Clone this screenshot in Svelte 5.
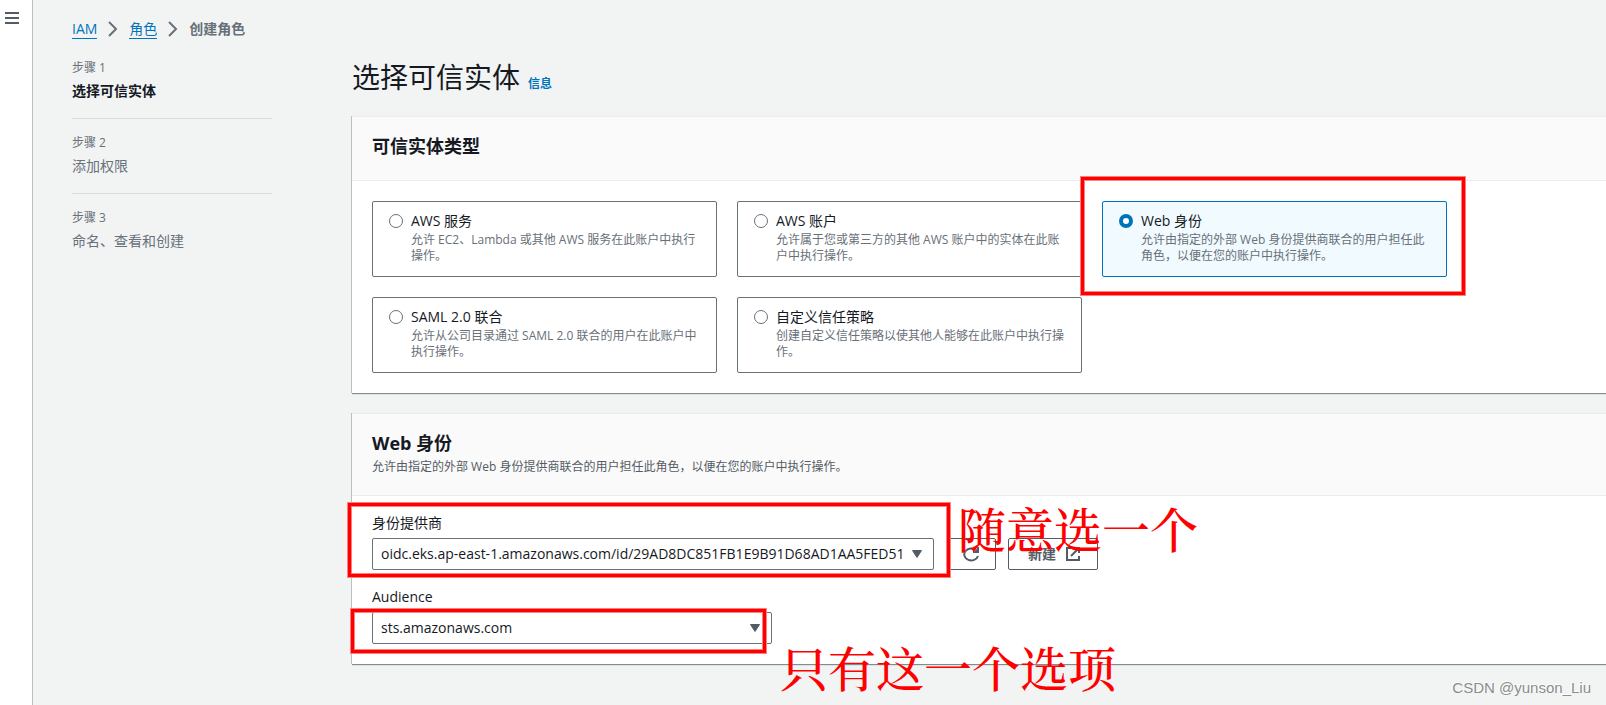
<script lang="ts">
  interface Step {
    label: string;
    title: string;
  }

  interface EntityType {
    value: string;
    label: string;
    description: string;
  }

  const steps: Step[] = [
    { label: '步骤 1', title: '选择可信实体' },
    { label: '步骤 2', title: '添加权限' },
    { label: '步骤 3', title: '命名、查看和创建' },
  ];

  const entityTypes: EntityType[] = [
    {
      value: 'service',
      label: 'AWS 服务',
      description: '允许 EC2、Lambda 或其他 AWS 服务在此账户中执行操作。',
    },
    {
      value: 'account',
      label: 'AWS 账户',
      description: '允许属于您或第三方的其他 AWS 账户中的实体在此账户中执行操作。',
    },
    {
      value: 'web',
      label: 'Web 身份',
      description: '允许由指定的外部 Web 身份提供商联合的用户担任此角色，以便在您的账户中执行操作。',
    },
    {
      value: 'saml',
      label: 'SAML 2.0 联合',
      description: '允许从公司目录通过 SAML 2.0 联合的用户在此账户中执行操作。',
    },
    {
      value: 'custom',
      label: '自定义信任策略',
      description: '创建自定义信任策略以使其他人能够在此账户中执行操作。',
    },
  ];

  const providers = ['oidc.eks.ap-east-1.amazonaws.com/id/29AD8DC851FB1E9B91D68AD1AA5FED51'];
  const audiences = ['sts.amazonaws.com'];

  let activeStep = $state(0);
  let entityType = $state('web');
  let provider = $state(providers[0]);
  let audience = $state(audiences[0]);
</script>

{#snippet chevron()}
  <svg class="chevron" viewBox="0 0 10 16" aria-hidden="true">
    <path d="M1 1l7 7-7 7" />
  </svg>
{/snippet}

{#snippet caret()}
  <svg class="caret" viewBox="0 0 10 8" aria-hidden="true">
    <path d="M.5.5h9L5 7.5z" />
  </svg>
{/snippet}

<div class="layout">
  <aside class="rail">
    <button class="rail-toggle" aria-label="打开导航">
      <svg viewBox="0 0 14 12" aria-hidden="true">
        <path d="M0 1h14M0 6h14M0 11h14" />
      </svg>
    </button>
  </aside>

  <div class="page">
    <nav class="breadcrumb" aria-label="导航路径">
      <a href="#iam">IAM</a>
      {@render chevron()}
      <a href="#roles">角色</a>
      {@render chevron()}
      <span>创建角色</span>
    </nav>

    <div class="wizard">
      <ol class="steps">
        {#each steps as step, i}
          <li class:active={i === activeStep}>
            <span class="step-label">{step.label}</span>
            <span class="step-title">{step.title}</span>
          </li>
        {/each}
      </ol>

      <main>
        <div class="title">
          <h1>选择可信实体</h1>
          <a href="#info">信息</a>
        </div>

        <section class="card">
          <header>
            <h2>可信实体类型</h2>
          </header>
          <div class="tiles">
            {#each entityTypes as type}
              <label class="tile" class:selected={entityType === type.value}>
                <input type="radio" name="entity-type" value={type.value} bind:group={entityType} />
                <span class="tile-text">
                  <span class="tile-label">{type.label}</span>
                  <span class="tile-description">{type.description}</span>
                </span>
                {#if type.value === 'web'}
                  <span class="mark mark--tile"></span>
                {/if}
              </label>
            {/each}
          </div>
        </section>

        <section class="card">
          <header>
            <h2>Web 身份</h2>
            <p>允许由指定的外部 Web 身份提供商联合的用户担任此角色，以便在您的账户中执行操作。</p>
          </header>
          <div class="fields">
            <div class="field">
              <label for="provider">身份提供商</label>
              <div class="field-row">
                <div class="select select--wide">
                  <select id="provider" bind:value={provider}>
                    {#each providers as item}
                      <option value={item}>{item}</option>
                    {/each}
                  </select>
                  {@render caret()}
                </div>
                <button class="button" aria-label="刷新">
                  <svg viewBox="0 0 16 16" aria-hidden="true">
                    <path d="M15 10a7 6 0 1 1-2-6l2 2M10 6h5V1" />
                  </svg>
                </button>
                <button class="button button--create">
                  新建
                  <svg viewBox="0 0 16 16" aria-hidden="true">
                    <path d="M7 2H3v12h12v-4M10 2h5v5M7 10l8-8" />
                  </svg>
                </button>
              </div>
              <span class="mark mark--provider"></span>
              <span class="note note--provider">随意选一个</span>
            </div>

            <div class="field">
              <label for="audience">Audience</label>
              <div class="select">
                <select id="audience" bind:value={audience}>
                  {#each audiences as item}
                    <option value={item}>{item}</option>
                  {/each}
                </select>
                {@render caret()}
              </div>
              <span class="mark mark--audience"></span>
              <span class="note note--audience">只有这一个选项</span>
            </div>
          </div>
        </section>
      </main>
    </div>
  </div>

  <span class="watermark">CSDN @yunson_Liu</span>
</div>

<style>
  :global(body) {
    background: #f2f4f4;
  }

  .layout {
    position: relative;
    display: flex;
    min-height: 100vh;
    font-family: 'Open Sans', 'Noto Sans CJK SC', sans-serif;
    font-size: 14px;
    line-height: 22px;
    color: #16191f;
    overflow: hidden;
  }

  .layout * {
    box-sizing: border-box;
  }

  a {
    color: #0073bb;
    text-decoration: none;
  }

  svg {
    flex: none;
    fill: none;
    stroke: #545b64;
    stroke-width: 2;
  }

  .rail {
    flex: none;
    width: 33px;
    background: #fff;
    border-right: 1px solid #b9c0c2;
  }

  .rail-toggle {
    display: block;
    padding: 12px 5px;
    border: none;
    background: transparent;
    cursor: pointer;
  }

  .rail-toggle svg {
    display: block;
    width: 14px;
    height: 12px;
  }

  .page {
    flex: 1;
    min-width: 0;
    padding: 20px 0 20px 39px;
  }

  .breadcrumb {
    display: flex;
    align-items: flex-start;
    gap: 11px;
    height: 19px;
    margin-bottom: 21px;
    line-height: 18px;
  }

  .breadcrumb a {
    border-bottom: 1px solid #0073bb;
  }

  .breadcrumb span {
    font-weight: 700;
    color: #687078;
  }

  .chevron {
    width: 10px;
    height: 18px;
    stroke: #687078;
  }

  .wizard {
    display: flex;
    gap: 80px;
  }

  .steps {
    flex: none;
    width: 200px;
    margin: 0;
    padding: 0;
    list-style: none;
    color: #687078;
  }

  .steps li {
    display: flex;
    flex-direction: column;
    gap: 4px;
    padding-bottom: 16px;
  }

  .steps li + li {
    padding-top: 16px;
    border-top: 1px solid #d5dbdb;
  }

  .step-label {
    font-size: 12px;
    line-height: 16px;
  }

  .active .step-title {
    font-weight: 700;
    color: #16191f;
  }

  main {
    flex: 1;
    min-width: 0;
    display: flex;
    flex-direction: column;
    gap: 20px;
  }

  .title {
    display: flex;
    align-items: baseline;
    gap: 8px;
    height: 36px;
  }

  h1 {
    margin: 0;
    font-size: 28px;
    font-weight: 400;
    line-height: 34px;
  }

  .title a {
    font-size: 12px;
    font-weight: 700;
  }

  .card {
    background: #fff;
    border-top: 1px solid #eaeded;
    box-shadow:
      0 1px 0 #808d8e,
      -1px 0 0 #b9c0c2,
      0 2px 0 #dfe3e3;
  }

  .card header {
    min-height: 64px;
    padding: 17px 20px 20px;
    background: #fafafa;
    border-bottom: 1px solid #eaeded;
  }

  h2 {
    margin: 0;
    font-size: 18px;
    line-height: 24px;
  }

  header p {
    margin: 4px 0 0;
    font-size: 12px;
    line-height: 16px;
    color: #545b64;
  }

  .tiles {
    display: grid;
    grid-template-columns: repeat(3, minmax(0, 345px));
    gap: 20px;
    padding: 20px;
  }

  .tile {
    position: relative;
    display: flex;
    gap: 8px;
    padding: 8px 16px 12px;
    border: 1px solid #687078;
    border-radius: 2px;
    cursor: pointer;
  }

  .tile.selected {
    background: #f1faff;
    border-color: #0073bb;
  }

  .tile input {
    appearance: none;
    flex: none;
    width: 14px;
    height: 14px;
    margin: 4px 0;
    background: #fff;
    border: 1px solid #687078;
    border-radius: 50%;
  }

  .tile input:checked {
    border: 4px solid #0073bb;
  }

  .tile-text {
    display: flex;
    flex-direction: column;
  }

  .tile-description {
    font-size: 12px;
    line-height: 16px;
    color: #687078;
  }

  .fields {
    display: flex;
    flex-direction: column;
    gap: 16px;
    padding: 16px 20px 20px;
  }

  .field {
    position: relative;
    display: flex;
    flex-direction: column;
    gap: 4px;
  }

  .field-row {
    display: flex;
    gap: 12px;
  }

  .select {
    position: relative;
    width: 400px;
  }

  .select--wide {
    width: 562px;
  }

  select {
    appearance: none;
    display: block;
    width: 100%;
    height: 32px;
    padding: 0 24px 0 8px;
    font: inherit;
    color: #16191f;
    background: #fff;
    border: 1px solid #687078;
    border-radius: 2px;
  }

  .caret {
    position: absolute;
    top: 12px;
    right: 12px;
    width: 10px;
    height: 8px;
    fill: #545b64;
    stroke-width: 1;
    stroke-linejoin: round;
    pointer-events: none;
  }

  .button {
    display: flex;
    align-items: center;
    gap: 8px;
    height: 32px;
    padding: 0 16px;
    font: inherit;
    font-weight: 700;
    color: #545b64;
    background: #fff;
    border: 1px solid #545b64;
    border-radius: 2px;
    cursor: pointer;
  }

  .button svg {
    width: 16px;
    height: 16px;
  }

  .button--create {
    padding: 0 17px 0 19px;
  }

  /* highlights and notes laid over the form */
  .mark {
    position: absolute;
    border: 3px solid #f00;
    box-shadow:
      0 0 0 1px #ff8080,
      inset 0 0 0 1px #ff8080;
    pointer-events: none;
  }

  .mark--tile {
    inset: -25px -19px -19px -22px;
  }

  .mark--provider {
    top: -9px;
    left: -24px;
    width: 602px;
    height: 74px;
  }

  .mark--audience {
    top: 23px;
    left: -21px;
    width: 415px;
    height: 44px;
  }

  .note {
    position: absolute;
    font-family: 'Noto Serif CJK SC', 'Noto Sans CJK SC', serif;
    font-size: 48px;
    font-weight: 500;
    line-height: 56px;
    color: #f00;
    white-space: nowrap;
    pointer-events: none;
  }

  .note--provider {
    top: -12px;
    left: 586px;
  }

  .note--audience {
    top: 53px;
    left: 408px;
  }

  .watermark {
    position: absolute;
    right: 15px;
    bottom: 6px;
    font-family: 'Liberation Sans', Arial, sans-serif;
    font-size: 15px;
    color: #8b8d8e;
    text-shadow: -1px -1px 0 #fff;
  }
</style>
